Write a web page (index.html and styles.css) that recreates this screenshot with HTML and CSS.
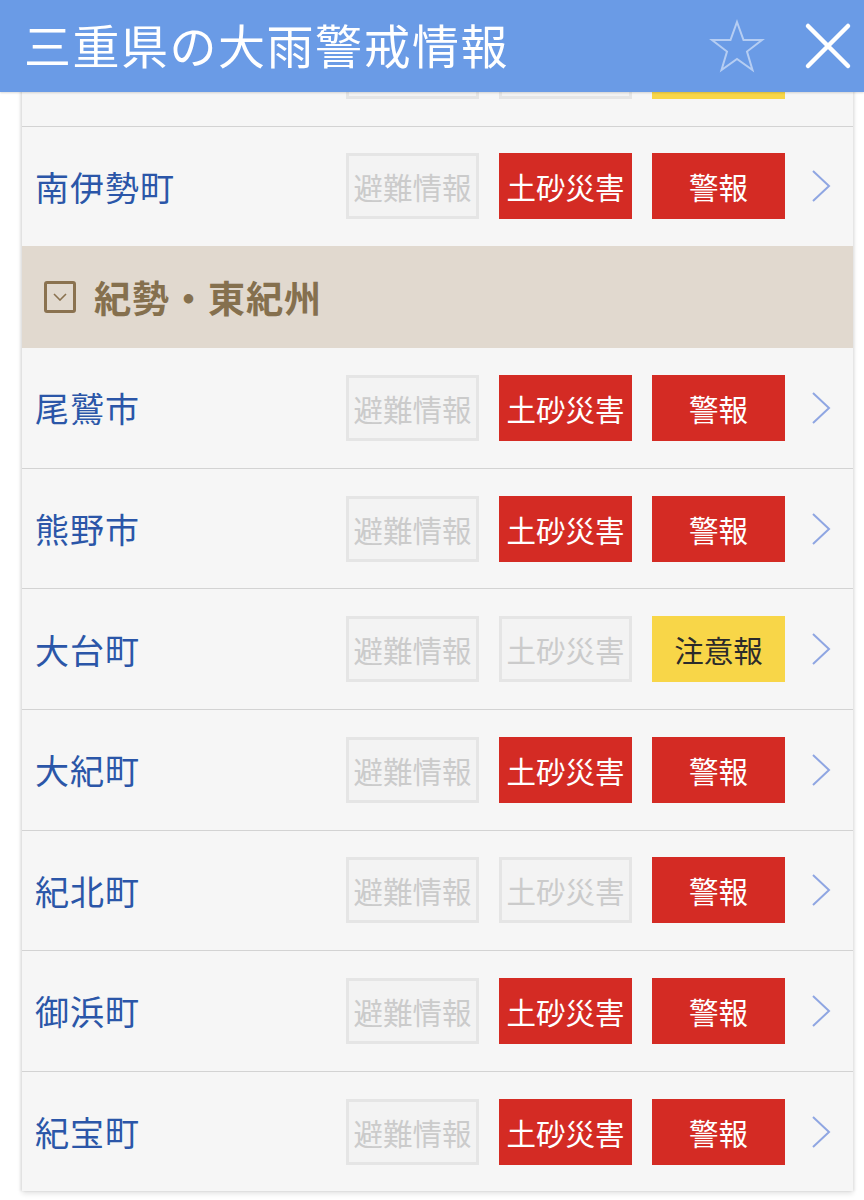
FILE: index.html
```html
<!DOCTYPE html>
<html lang="ja">
<head>
<meta charset="utf-8">
<title>三重県の大雨警戒情報</title>
<link rel="stylesheet" href="styles.css">
</head>
<body>
<header class="topbar">
  <h1 class="title">三重県の大雨警戒情報</h1>
  <div class="actions">
    <svg class="star" width="58" height="56" viewBox="0 0 58 56"><polygon points="29,3 35.5,21 54,21 39,32.5 44.5,51 29,40 13.5,51 19,32.5 4,21 22.5,21" fill="none" stroke="rgba(255,255,255,0.5)" stroke-width="2" stroke-linejoin="miter"/></svg>
    <svg class="close" width="48" height="48" viewBox="0 0 48 48"><path d="M4 4 L44 44 M44 4 L4 44" stroke="#fff" stroke-width="4.5" stroke-linecap="round"/></svg>
  </div>
</header>
<main class="card">
  <div class="row"><span class="name"></span><span class="badge off"></span><span class="badge off"></span><span class="badge warn end"></span><span class="chev"></span></div>
  <div class="row last"><span class="name">南伊勢町</span><span class="badge off">避難情報</span><span class="badge red">土砂災害</span><span class="badge red end">警報</span><span class="chev"><svg width="22" height="34" viewBox="0 0 22 34"><path d="M3 2 L19 17 L3 32" fill="none" stroke="#8fa6e2" stroke-width="2"/></svg></span></div>
  <div class="section"><span class="sicon"><svg width="14" height="8" viewBox="0 0 14 8"><path d="M1 1 L7 7 L13 1" fill="none" stroke="#8a7250" stroke-width="1.6"/></svg></span><span class="stext">紀勢・東紀州</span></div>
  <div class="row"><span class="name">尾鷲市</span><span class="badge off">避難情報</span><span class="badge red">土砂災害</span><span class="badge red end">警報</span><span class="chev"><svg width="22" height="34" viewBox="0 0 22 34"><path d="M3 2 L19 17 L3 32" fill="none" stroke="#8fa6e2" stroke-width="2"/></svg></span></div>
  <div class="row"><span class="name">熊野市</span><span class="badge off">避難情報</span><span class="badge red">土砂災害</span><span class="badge red end">警報</span><span class="chev"><svg width="22" height="34" viewBox="0 0 22 34"><path d="M3 2 L19 17 L3 32" fill="none" stroke="#8fa6e2" stroke-width="2"/></svg></span></div>
  <div class="row"><span class="name">大台町</span><span class="badge off">避難情報</span><span class="badge off">土砂災害</span><span class="badge warn end">注意報</span><span class="chev"><svg width="22" height="34" viewBox="0 0 22 34"><path d="M3 2 L19 17 L3 32" fill="none" stroke="#8fa6e2" stroke-width="2"/></svg></span></div>
  <div class="row"><span class="name">大紀町</span><span class="badge off">避難情報</span><span class="badge red">土砂災害</span><span class="badge red end">警報</span><span class="chev"><svg width="22" height="34" viewBox="0 0 22 34"><path d="M3 2 L19 17 L3 32" fill="none" stroke="#8fa6e2" stroke-width="2"/></svg></span></div>
  <div class="row"><span class="name">紀北町</span><span class="badge off">避難情報</span><span class="badge off">土砂災害</span><span class="badge red end">警報</span><span class="chev"><svg width="22" height="34" viewBox="0 0 22 34"><path d="M3 2 L19 17 L3 32" fill="none" stroke="#8fa6e2" stroke-width="2"/></svg></span></div>
  <div class="row"><span class="name">御浜町</span><span class="badge off">避難情報</span><span class="badge red">土砂災害</span><span class="badge red end">警報</span><span class="chev"><svg width="22" height="34" viewBox="0 0 22 34"><path d="M3 2 L19 17 L3 32" fill="none" stroke="#8fa6e2" stroke-width="2"/></svg></span></div>
  <div class="row last"><span class="name">紀宝町</span><span class="badge off">避難情報</span><span class="badge red">土砂災害</span><span class="badge red end">警報</span><span class="chev"><svg width="22" height="34" viewBox="0 0 22 34"><path d="M3 2 L19 17 L3 32" fill="none" stroke="#8fa6e2" stroke-width="2"/></svg></span></div>
</main>
</body>
</html>
```

FILE: styles.css
```css
* { box-sizing: border-box; }
html, body { margin: 0; padding: 0; background: #ffffff; }
body {
  font-family: "Noto Sans CJK JP", "Noto Sans", sans-serif;
  padding-top: 6px;
  padding-bottom: 40px;
}
.topbar {
  position: fixed;
  top: 0; left: 0; right: 0;
  height: 92px;
  background: #6a9be6;
  display: flex;
  align-items: center;
  justify-content: space-between;
  padding: 0 12px 0 24px;
  z-index: 10;
  box-shadow: 0 1px 2px rgba(0,0,0,0.15);
}
.title {
  margin: 0;
  color: #ffffff;
  font-weight: 400;
  font-size: 47px;
  letter-spacing: 1.5px;
  line-height: 1;
  white-space: nowrap;
  transform: translateY(-3px);
}
.actions {
  display: flex;
  align-items: center;
  gap: 38px;
}
.star { display: block; margin-top: 2px; }
.close { display: block; }
.card {
  margin-left: 22px;
  width: 831px;
  background: #f6f6f6;
  box-shadow: -2px 0 2px rgba(0,0,0,0.08), 2px 0 2px rgba(0,0,0,0.06), 0 3px 5px rgba(0,0,0,0.10);
}
.row {
  height: 120.6px;
  border-bottom: 1px solid #d3d3d3;
  display: flex;
  align-items: center;
  padding-left: 13px;
}
.row.last { border-bottom: none; height: 119.6px; }
.name {
  flex: 1;
  color: #2b56a8;
  font-size: 34px;
  letter-spacing: 1px;
  white-space: nowrap;
}
.badge {
  width: 133px;
  height: 66px;
  margin-right: 20px;
  display: flex;
  align-items: center;
  justify-content: center;
  font-size: 29.5px;
  white-space: nowrap;
}
.badge.end { margin-right: 0; }
.badge.off {
  background: #f3f3f3;
  border: 3px solid #e5e5e5;
  color: #cbcbcb;
}
.badge.red {
  background: #d42b24;
  color: #ffffff;
}
.badge.warn {
  background: #f8d648;
  color: #2b2b2b;
}
.chev {
  width: 68px;
  display: flex;
  justify-content: center;
  padding-left: 4px;
}
.chev svg { display: block; }
.section {
  height: 102px;
  background: #e1d9cf;
  display: flex;
  align-items: center;
  padding-left: 22px;
}
.sicon {
  width: 32px;
  height: 32px;
  border: 3px solid #8a7250;
  border-radius: 3px;
  display: flex;
  align-items: center;
  justify-content: center;
  margin-right: 18px;
}
.sicon svg { display: block; }
.stext {
  color: #85704e;
  font-size: 37px;
  font-weight: 700;
  letter-spacing: 1px;
}
```
